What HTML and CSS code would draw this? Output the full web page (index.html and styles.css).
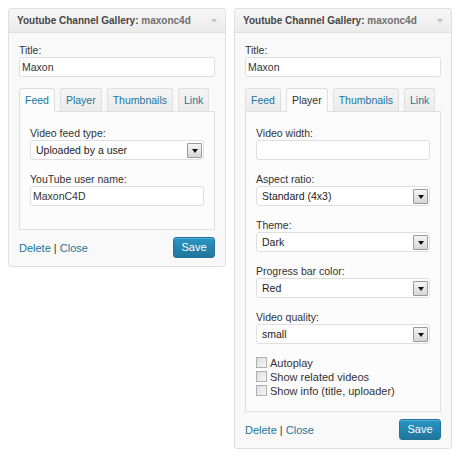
FILE: index.html
```html
<!DOCTYPE html>
<html>
<head>
<meta charset="utf-8">
<link rel="stylesheet" href="styles.css">
</head>
<body>
<div class="page">
  <div class="widget">
    <div class="w-head">
      <span class="w-title">Youtube Channel Gallery: <span class="in-title">maxonc4d</span></span>
      <span class="w-arrow"></span>
    </div>
    <div class="w-body">
      <div class="lbl">Title:</div>
      <div class="input">Maxon</div>
      <div class="tabs">
        <span class="tab active">Feed</span>
        <span class="tab">Player</span>
        <span class="tab">Thumbnails</span>
        <span class="tab">Link</span>
      </div>
      <div class="panel panel-feed">
        <div class="field">
          <div class="lbl">Video feed type:</div>
          <div class="select"><span>Uploaded by a user</span><span class="sel-btn"></span></div>
        </div>
        <div class="field">
          <div class="lbl">YouTube user name:</div>
          <div class="input">MaxonC4D</div>
        </div>
      </div>
      <div class="actions">
        <span class="links"><span class="link">Delete</span> | <span class="link">Close</span></span>
        <span class="btn">Save</span>
      </div>
    </div>
  </div>

  <div class="widget">
    <div class="w-head">
      <span class="w-title">Youtube Channel Gallery: <span class="in-title">maxonc4d</span></span>
      <span class="w-arrow"></span>
    </div>
    <div class="w-body">
      <div class="lbl">Title:</div>
      <div class="input">Maxon</div>
      <div class="tabs">
        <span class="tab">Feed</span>
        <span class="tab active dark">Player</span>
        <span class="tab">Thumbnails</span>
        <span class="tab">Link</span>
      </div>
      <div class="panel">
        <div class="field">
          <div class="lbl">Video width:</div>
          <div class="input"></div>
        </div>
        <div class="field">
          <div class="lbl">Aspect ratio:</div>
          <div class="select"><span>Standard (4x3)</span><span class="sel-btn"></span></div>
        </div>
        <div class="field">
          <div class="lbl">Theme:</div>
          <div class="select"><span>Dark</span><span class="sel-btn"></span></div>
        </div>
        <div class="field">
          <div class="lbl">Progress bar color:</div>
          <div class="select"><span>Red</span><span class="sel-btn"></span></div>
        </div>
        <div class="field">
          <div class="lbl">Video quality:</div>
          <div class="select"><span>small</span><span class="sel-btn"></span></div>
        </div>
        <div class="checks">
          <div class="check"><span class="box"></span>Autoplay</div>
          <div class="check"><span class="box"></span>Show related videos</div>
          <div class="check"><span class="box"></span>Show info (title, uploader)</div>
        </div>
      </div>
      <div class="actions">
        <span class="links"><span class="link">Delete</span> | <span class="link">Close</span></span>
        <span class="btn">Save</span>
      </div>
    </div>
  </div>
</div>
</body>
</html>
```
FILE: styles.css
```css
body {
  margin: 0;
  background: #fff;
  font-family: "Liberation Sans", Arial, sans-serif;
  font-size: 10.5px;
  color: #333;
}

.page {
  display: flex;
  align-items: flex-start;
  gap: 8px;
  padding: 8px;
}

.widget {
  width: 218px;
  box-sizing: border-box;
  border: 1px solid #dfdfdf;
  border-radius: 3px;
  background: #f9f9f9;
}

.w-head {
  height: 23px;
  border-bottom: 1px solid #dfdfdf;
  background: linear-gradient(#f7f7f7, #ececec);
  border-radius: 3px 3px 0 0;
  display: flex;
  align-items: center;
  justify-content: space-between;
  padding: 0 8px;
}

.w-title {
  font-size: 10px;
  font-weight: bold;
  color: #464646;
}

.in-title {
  color: #6f6f6f;
}

.w-arrow {
  width: 0;
  height: 0;
  border-left: 3px solid transparent;
  border-right: 3px solid transparent;
  border-top: 4px solid #c4c4c4;
  margin-top: 1px;
}

.w-body {
  padding: 10px 10px 8px;
}

.lbl {
  line-height: 14px;
  color: #333;
}

.input {
  height: 20px;
  box-sizing: border-box;
  border: 1px solid #dfdfdf;
  border-radius: 3px;
  background: #fff;
  padding: 0 2px;
  line-height: 18px;
  color: #333;
}

.tabs {
  display: flex;
  align-items: flex-start;
  gap: 5px;
  margin-top: 11px;
  margin-bottom: -1px;
  position: relative;
  z-index: 1;
}

.tab {
  height: 23px;
  box-sizing: border-box;
  border: 1px solid #dfdfdf;
  border-bottom: none;
  border-radius: 3px 3px 0 0;
  background: linear-gradient(#f4f4f4, #ececec);
  padding: 0 5px;
  line-height: 22px;
  color: #21759b;
}

.tab.active {
  height: 24px;
  background: #fcfcfc;
}

.tab.dark {
  color: #333;
}

.panel {
  border: 1px solid #dfdfdf;
  background: #fcfcfc;
  padding: 14px 10px 11px;
}

.field {
  margin-bottom: 12px;
}

.select {
  height: 20px;
  box-sizing: border-box;
  border: 1px solid #dfdfdf;
  border-radius: 3px;
  background: #fff;
  display: flex;
  align-items: center;
  justify-content: space-between;
  padding: 0 1px 0 5px;
  color: #222;
}

.sel-btn {
  width: 15px;
  height: 15px;
  box-sizing: border-box;
  border: 1px solid #9a9a9a;
  border-radius: 1px;
  background: linear-gradient(#f6f6f6, #d6d6d6);
  display: flex;
  align-items: center;
  justify-content: center;
}

.sel-btn::after {
  content: "";
  width: 0;
  height: 0;
  border-left: 3px solid transparent;
  border-right: 3px solid transparent;
  border-top: 4px solid #111;
  margin-top: 1px;
}

.checks {
  margin-bottom: 2px;
}

.check {
  display: flex;
  align-items: center;
  height: 14px;
  gap: 3px;
  color: #333;
  font-size: 11px;
}

.box {
  width: 11px;
  height: 11px;
  box-sizing: border-box;
  border: 1px solid #b0b0b0;
  background: linear-gradient(135deg, #dedede, #f7f7f7);
  margin-top: -1px;
}

.actions {
  display: flex;
  align-items: center;
  justify-content: space-between;
  margin-top: 7px;
}

.links {
  color: #333;
  font-size: 11px;
}

.link {
  color: #21759b;
}

.btn {
  width: 42px;
  height: 21px;
  box-sizing: border-box;
  border: 1px solid #21759b;
  border-radius: 3px;
  background: linear-gradient(#2a95c5, #21759b);
  box-shadow: inset 0 1px 0 rgba(120, 200, 230, 0.5);
  color: #fff;
  text-align: center;
  line-height: 19px;
  font-size: 11px;
}
```
